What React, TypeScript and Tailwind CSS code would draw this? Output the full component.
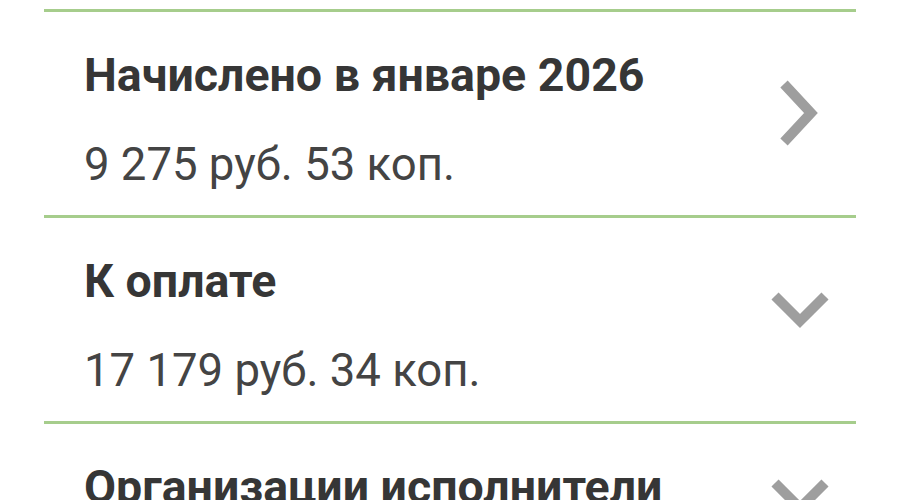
import React from "react";

type Row = {
  title: string;
  amount: string;
  icon: "right" | "down";
  iconClass: string;
};

const rows: Row[] = [
  { title: "Начислено в январе 2026", amount: "9 275 руб. 53 коп.", icon: "right", iconClass: "mt-[66px]" },
  { title: "К оплате", amount: "17 179 руб. 34 коп.", icon: "down", iconClass: "mt-[72px]" },
  { title: "Организации исполнители", amount: "", icon: "down", iconClass: "mt-[53px]" },
];

const ChevronRight = ({ className }: { className: string }) => (
  <svg className={className} width="60" height="70" viewBox="0 0 60 70" fill="none">
    <polyline points="14,6 41,35 14,64" stroke="#9e9e9e" strokeWidth="10" strokeLinejoin="miter" />
  </svg>
);

const ChevronDown = ({ className }: { className: string }) => (
  <svg className={className} width="60" height="40" viewBox="0 0 60 40" fill="none">
    <polyline points="5,6 30,31 55,6" stroke="#9e9e9e" strokeWidth="10" strokeLinejoin="miter" />
  </svg>
);

export default function App() {
  return (
    <div
      className="w-[900px] h-[500px] overflow-hidden bg-white pt-[9px] px-[44px]"
      style={{ fontFamily: "Roboto, 'Noto Sans', sans-serif" }}
    >
      {rows.map((row) => (
        <div key={row.title} className="border-t-[3px] border-[#a6cd8c] flex items-start justify-between pl-[40px] pr-[26px] h-[206px]">
          <div className="pt-[41px]">
            <div className="text-[46.5px] leading-[45px] font-bold text-[#363636] whitespace-nowrap">{row.title}</div>
            {row.amount && (
              <div className="mt-[44px] text-[45.5px] leading-[45px] text-[#444444] whitespace-nowrap">{row.amount}</div>
            )}
          </div>
          {row.icon === "right" ? (
            <ChevronRight className={row.iconClass} />
          ) : (
            <ChevronDown className={row.iconClass} />
          )}
        </div>
      ))}
    </div>
  );
}
